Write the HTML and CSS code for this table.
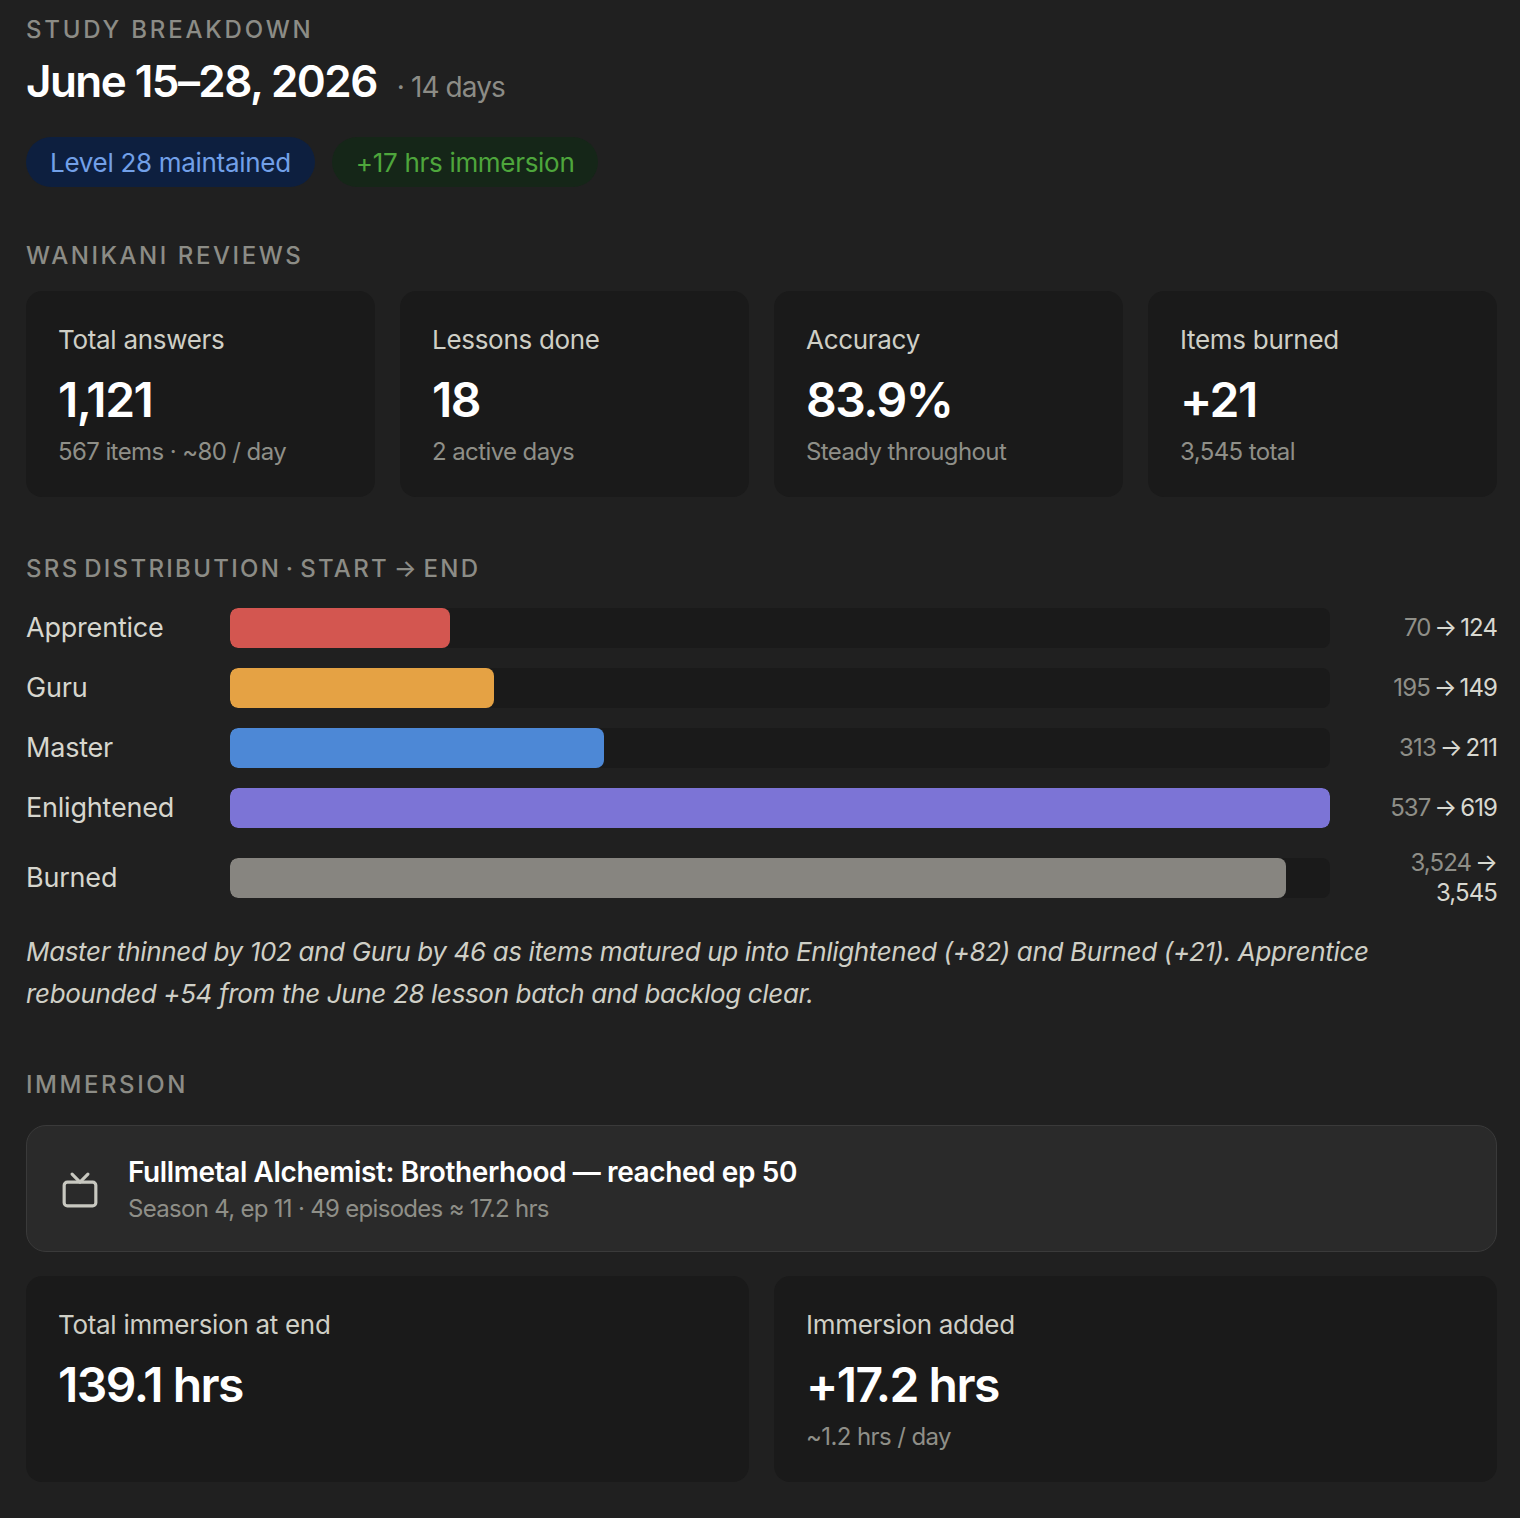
FILE: index.html
```html
<!DOCTYPE html>
<html lang="en">
<head>
<meta charset="utf-8">
<title>Study breakdown</title>
<link rel="stylesheet" href="styles.css">
</head>
<body>
<main class="page">
  <div class="eyebrow">Study breakdown</div>
  <div class="title-row">
    <h1 class="title">June 15–28, 2026</h1>
    <span class="title-meta">· 14 days</span>
  </div>
  <div class="pills">
    <span class="pill pill-blue">Level 28 maintained</span>
    <span class="pill pill-green">+17 hrs immersion</span>
  </div>

  <div class="section-label section-reviews">WaniKani reviews</div>
  <div class="stats stats-4">
    <div class="stat">
      <div class="stat-label">Total answers</div>
      <div class="stat-value">1,121</div>
      <div class="stat-sub">567 items · ~80 / day</div>
    </div>
    <div class="stat">
      <div class="stat-label">Lessons done</div>
      <div class="stat-value">18</div>
      <div class="stat-sub">2 active days</div>
    </div>
    <div class="stat">
      <div class="stat-label">Accuracy</div>
      <div class="stat-value">83.9%</div>
      <div class="stat-sub">Steady throughout</div>
    </div>
    <div class="stat">
      <div class="stat-label">Items burned</div>
      <div class="stat-value">+21</div>
      <div class="stat-sub">3,545 total</div>
    </div>
  </div>

  <div class="section-label section-srs">SRS distribution · start → end</div>
  <div class="srs">
    <div class="srs-name">Apprentice</div>
    <div class="track"><div class="fill fill-red" style="width:20%"></div></div>
    <div class="srs-val"><span class="from">70</span> <span>→</span> <span>124</span></div>

    <div class="srs-name">Guru</div>
    <div class="track"><div class="fill fill-orange" style="width:24%"></div></div>
    <div class="srs-val"><span class="from">195</span> <span>→</span> <span>149</span></div>

    <div class="srs-name">Master</div>
    <div class="track"><div class="fill fill-blue" style="width:34%"></div></div>
    <div class="srs-val"><span class="from">313</span> <span>→</span> <span>211</span></div>

    <div class="srs-name">Enlightened</div>
    <div class="track"><div class="fill fill-purple" style="width:100%"></div></div>
    <div class="srs-val"><span class="from">537</span> <span>→</span> <span>619</span></div>

    <div class="srs-name">Burned</div>
    <div class="track"><div class="fill fill-gray" style="width:96%"></div></div>
    <div class="srs-val"><span class="from">3,524</span> <span>→</span> <span>3,545</span></div>
  </div>
  <p class="note">Master thinned by 102 and Guru by 46 as items matured up into Enlightened (+82) and Burned (+21). Apprentice rebounded +54 from the June 28 lesson batch and backlog clear.</p>

  <div class="section-label section-imm">Immersion</div>
  <div class="show">
    <svg class="show-icon" viewBox="0 0 24 24" width="38" height="38" fill="none" stroke="currentColor" stroke-width="2" stroke-linecap="round" stroke-linejoin="round">
      <rect x="2" y="7" width="20" height="15" rx="2" ry="2"></rect>
      <polyline points="17 2 12 7 7 2"></polyline>
    </svg>
    <div class="show-text">
      <div class="show-title">Fullmetal Alchemist: Brotherhood — reached ep 50</div>
      <div class="show-sub">Season 4, ep 11 · 49 episodes ≈ 17.2 hrs</div>
    </div>
  </div>
  <div class="stats stats-2">
    <div class="stat">
      <div class="stat-label">Total immersion at end</div>
      <div class="stat-value">139.1 hrs</div>
    </div>
    <div class="stat">
      <div class="stat-label">Immersion added</div>
      <div class="stat-value">+17.2 hrs</div>
      <div class="stat-sub">~1.2 hrs / day</div>
    </div>
  </div>
</main>
</body>
</html>
```

FILE: styles.css
```css
* { box-sizing: border-box; }
html, body { margin: 0; padding: 0; }
body {
  background: #202020;
  color: #d6d6ce;
  font-family: Inter, "Noto Sans", "Liberation Sans", sans-serif;
  -webkit-font-smoothing: antialiased;
}
.page {
  padding: 15px 23px 34px 26px;
  display: flex;
  flex-direction: column;
}
.eyebrow, .section-label {
  font-size: 24px;
  line-height: 30px;
  letter-spacing: 2.8px;
  text-transform: uppercase;
  color: #8c8c86;
  font-weight: 500;
}
.section-label { letter-spacing: 2.55px; }
.title-row {
  margin-top: 8px;
  display: flex;
  align-items: baseline;
  gap: 20px;
  line-height: 56px;
}
.title {
  margin: 0;
  font-size: 44px;
  font-weight: 600;
  letter-spacing: -1.55px;
  color: #ffffff;
}
.title-meta {
  font-size: 28px;
  color: #8c8c86;
  letter-spacing: -0.9px;
}
.pills {
  margin-top: 22px;
  display: flex;
  gap: 17px;
}
.pill {
  height: 50px;
  padding: 0 24px;
  border-radius: 25px;
  display: inline-flex;
  align-items: center;
  font-size: 26px;
  letter-spacing: -0.3px;
}
.pill-blue { background: #0d1f3f; color: #72a0e8; }
.pill-green { background: #152618; color: #4ea63c; }

.section-reviews { margin-top: 54px; }
.stats {
  margin-top: 20px;
  display: grid;
  gap: 25px;
}
.stats-4 { grid-template-columns: repeat(4, 1fr); }
.stats-2 { grid-template-columns: repeat(2, 1fr); margin-top: 24px; }
.stat {
  background: #1a1a1a;
  border-radius: 16px;
  padding: 32px 32px 29px;
  min-height: 206px;
}
.stat-label {
  font-size: 26px;
  line-height: 34px;
  color: #cfcfc6;
  letter-spacing: -0.3px;
}
.stat-value {
  margin-top: 15px;
  font-size: 48px;
  line-height: 56px;
  font-weight: 600;
  color: #ffffff;
  letter-spacing: -1.5px;
}
.stat-sub {
  margin-top: 8px;
  font-size: 24px;
  line-height: 32px;
  color: #8f8f88;
  letter-spacing: -0.6px;
}

.section-srs { margin-top: 57px; letter-spacing: 2.3px; word-spacing: -4px; }
.srs {
  margin-top: 24px;
  display: grid;
  grid-template-columns: 180px 1fr 143px;
  column-gap: 24px;
  row-gap: 20px;
  align-items: center;
}
.srs-name {
  font-size: 27px;
  line-height: 40px;
  color: #d6d6ce;
  letter-spacing: -0.2px;
}
.track {
  height: 40px;
  background: #1a1a1a;
  border-radius: 8px;
  overflow: hidden;
}
.fill { height: 100%; border-radius: 8px; }
.fill-red { background: #d35650; }
.fill-orange { background: #e5a244; }
.fill-blue { background: #4d88d6; }
.fill-purple { background: #7c74d6; }
.fill-gray { background: #878580; }
.srs-val {
  text-align: right;
  font-size: 24px;
  line-height: 30px;
  color: #d8d8d0;
  letter-spacing: -0.9px;
  word-spacing: -2px;
}
.srs-val .from { color: #8f8f88; }

.note {
  margin: 23px 0 0;
  font-size: 26px;
  line-height: 42px;
  font-style: italic;
  color: #cfcfc6;
  letter-spacing: -0.35px;
}

.section-imm { margin-top: 55px; }
.show {
  margin-top: 25px;
  background: #2a2a2a;
  border: 1px solid #3a3a3a;
  border-radius: 20px;
  padding: 28px 24px 26px 34px;
  display: flex;
  align-items: center;
  gap: 29px;
}
.show-icon { color: #c8c8c0; flex: none; }
.show-title {
  font-size: 28px;
  line-height: 36px;
  font-weight: 600;
  color: #ffffff;
  letter-spacing: -0.4px;
}
.show-sub {
  margin-top: 3px;
  font-size: 24px;
  line-height: 32px;
  color: #8f8f88;
  letter-spacing: -0.7px;
}
```
